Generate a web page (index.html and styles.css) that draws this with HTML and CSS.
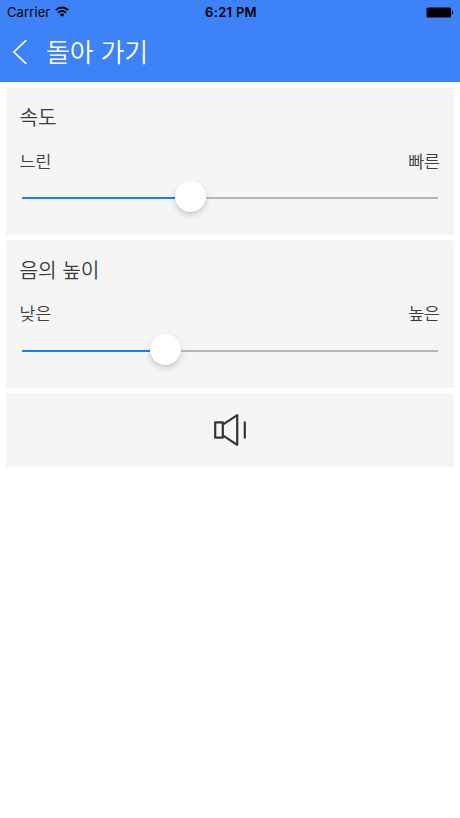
FILE: index.html
```html
<!DOCTYPE html>
<html lang="ko">
<head>
<meta charset="utf-8">
<title>돌아 가기</title>
<link rel="stylesheet" href="styles.css">
</head>
<body>
<header class="header">
  <div class="status">
    <div class="carrier">
      <span>Carrier</span>
      <svg class="wifi" width="14" height="11" viewBox="0 0 14 11" fill="none" stroke="#000" stroke-width="2">
        <path d="M.9 4.1a8.7 8.7 0 0 1 12.2 0M3.1 6.7a5.6 5.6 0 0 1 7.8 0"/>
        <path d="M7 10.8 4.6 8.6a3.2 3.2 0 0 1 4.8 0z" fill="#000" stroke="none"/>
      </svg>
    </div>
    <span class="time">6:21 PM</span>
    <svg class="battery" width="28" height="11" viewBox="0 0 28 11">
      <rect x=".5" y=".5" width="24.6" height="10" rx="1.6"/>
      <path d="M26 3.7c1.6.4 1.6 3.2 0 3.6z"/>
    </svg>
  </div>
  <nav class="nav">
    <svg class="back" width="16" height="26" viewBox="0 0 16 26" fill="none" stroke="#fff" stroke-width="1.6">
      <path d="M14.3 1.2 1.8 13l12.5 11.8"/>
    </svg>
    <h1 class="title">돌아 가기</h1>
  </nav>
</header>
<main class="cards">
  <section class="card">
    <h2 class="label">속도</h2>
    <div class="range range-speed"><span>느린</span><span>빠른</span></div>
    <div class="slider"><div class="fill fill-speed"></div><div class="thumb"></div><div class="rest"></div></div>
  </section>
  <section class="card card-pitch">
    <h2 class="label">음의 높이</h2>
    <div class="range"><span>낮은</span><span>높은</span></div>
    <div class="slider"><div class="fill fill-pitch"></div><div class="thumb"></div><div class="rest"></div></div>
  </section>
  <section class="card card-play">
    <svg width="34" height="34" viewBox="0 0 34 34" fill="none" stroke="#303638" stroke-width="2.2" stroke-linejoin="round" stroke-linecap="round">
      <path d="M2.2 9.3h7.6v15.4H2.2zM9.8 11.7 24.2 2.2v29.6L9.8 22.3M31.8 9.3v15.4"/>
    </svg>
  </section>
</main>
</body>
</html>
```
FILE: styles.css
```css
* { box-sizing: border-box; }
body {
  margin: 0;
  background: #fff;
  color: #383c3e;
  font-family: "Noto Sans CJK KR", sans-serif;
}
.header { height: 82px; background: #3e82f7; }
.status {
  display: grid;
  grid-template-columns: 1fr auto 1fr;
  align-items: center;
  height: 24px;
  padding: 0 5px 0 7px;
  color: #000;
  font: 13px/24px Inter, sans-serif;
}
.carrier { display: flex; align-items: center; gap: 5px; letter-spacing: 0.1px; }
.wifi { margin-top: -2px; }
.time { font-weight: 600; letter-spacing: 0.3px; }
.battery { justify-self: end; margin-right: 1px; }
.nav { display: flex; align-items: center; height: 56px; padding-left: 12px; }
.title {
  margin: -2px 0 0 18px;
  color: #fff;
  font-size: 26px;
  font-weight: 350;
  line-height: 56px;
  letter-spacing: -0.2px;
}
.cards { display: flex; flex-direction: column; gap: 5px; padding: 6px 6px 0; }
.card { height: 147px; padding: 12px 14px 0; background: #f5f5f5; border-radius: 2px; }
.card-pitch { height: 148px; padding-top: 13px; }
.card-play { display: flex; align-items: center; justify-content: center; height: 74px; padding: 0; }
.label { margin: 0 0 0 -0.5px; font-size: 20.3px; font-weight: 350; line-height: 32px; letter-spacing: -0.1px; }
.range {
  display: flex;
  justify-content: space-between;
  margin: 14px 0 0 -0.5px;
  font-size: 17.3px;
  font-weight: 350;
  line-height: 28px;
}
.range-speed { margin-top: 15px; }
.slider { display: flex; align-items: center; height: 31px; margin: 7px 2px 0; }
.range-speed + .slider { margin-top: 6px; }
.fill, .rest { height: 2px; margin-top: 3px; }
.fill { background: #147efb; }
.fill-speed { width: 153px; }
.fill-pitch { width: 128px; }
.rest { flex: 1; background: #b4b4b4; }
.thumb {
  flex: none;
  width: 31px;
  height: 31px;
  border-radius: 50%;
  background: #fff;
  box-shadow: 0 3px 6px rgba(0, 0, 0, 0.16), 0 1px 1px rgba(0, 0, 0, 0.08);
}
```
